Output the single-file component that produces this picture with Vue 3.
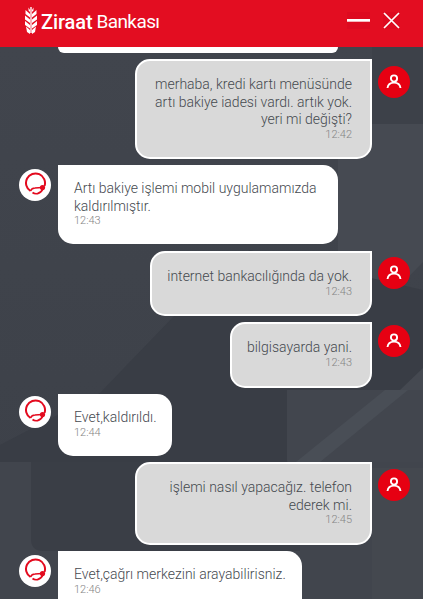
<template>
  <div class="chat">
    <header class="top">
      <div class="logo">
        <svg class="wheat" width="12" height="27" viewBox="0 0 12 27">
          <path d="M6 0 L6 26" stroke="#fff" stroke-width="1.4" />
          <path d="M3.5 0.5 L5 3 L5 5 L3.5 3.5Z M8.5 0.5 L7 3 L7 5 L8.5 3.5Z M0.5 3 L5 7 L5 10.5 L0.5 7Z M11.5 3 L7 7 L7 10.5 L11.5 7Z M0 8.5 L5 12.5 L5 16 L0 12.5Z M12 8.5 L7 12.5 L7 16 L12 12.5Z M0 14 L5 18 L5 21.5 L0 18Z M12 14 L7 18 L7 21.5 L12 18Z M1 19.5 L5 23 L5 27 L2 25Z M11 19.5 L7 23 L7 27 L10 25Z" fill="#fff" />
        </svg>
        <span class="brand"><b>Ziraat</b><i>Bankası</i></span>
      </div>
      <div class="controls">
        <span class="min"></span>
        <span class="close">
          <svg width="17" height="17" viewBox="0 0 17 17">
            <path d="M1 1 L16 16 M16 1 L1 16" stroke="#fff" stroke-width="1.7" />
          </svg>
        </span>
      </div>
    </header>

    <main class="body">
      <svg class="backdrop" width="423" height="552" viewBox="0 47 423 552">
        <defs>
          <linearGradient id="base" x1="0" y1="0" x2="0" y2="1">
            <stop offset="0" stop-color="#41454d" />
            <stop offset="1" stop-color="#3c4048" />
          </linearGradient>
        </defs>
        <rect x="0" y="47" width="423" height="552" fill="url(#base)" />
        <path d="M372 47 H423 V124 H372Z" fill="#3d4149" />
        <path d="M338 124 H423 V262 L396 290 H338Z" fill="#464a52" />
        <path d="M0 445 L100 393 L173 317 L250 250 L423 290 V462 H0Z" fill="#393d45" />
        <path d="M400 390 L423 368 V390Z" fill="#454951" />
        <path d="M287 390 H423 V468 H295 Q287 468 287 460Z" fill="#42464e" />
        <path d="M296 462 L385 390 H408 L320 462Z" fill="#494e56" />
        <path d="M0 462 H423 V599 H0Z" fill="#41454d" />
        <path d="M31 462 H300 V551 H43 Q31 551 31 539Z" fill="#3a3e46" />
        <path d="M372 468 H423 V599 H372Z" fill="#44484f" />
      </svg>

      <div class="stub"></div>
      <div
        v-for="(m, i) in messages"
        :key="i"
        class="row"
        :class="m.me ? 'me' : 'bot'"
        :style="{ height: m.h + 'px', marginTop: m.gap + 'px' }"
      >
        <div v-if="!m.me" class="avatar" :style="{ marginTop: m.av + 'px' }">
          <svg width="26" height="26" viewBox="0 0 26 26" fill="none">
            <path d="M8.5 19 A9.5 9.5 0 1 1 22.5 14" stroke="#e30a1e" stroke-width="2" />
            <path d="M8.5 19 C9.5 16.5 11 16 13 16 L20 15.5" stroke="#e30a1e" stroke-width="1.5" />
            <path d="M10.5 20.5 C13 22.5 18 22.5 21 17" stroke="#e30a1e" stroke-width="1.7" />
            <circle cx="20.5" cy="15.5" r="2.6" fill="#e30a1e" />
          </svg>
        </div>
        <div class="bubble" :style="{ width: m.w + 'px' }">
          <p class="text" v-for="(line, j) in m.lines" :key="j">{{ line }}</p>
          <span class="time">{{ m.time }}</span>
        </div>
        <div v-if="m.me" class="avatar red" :style="{ marginTop: m.av + 'px' }">
          <svg width="16" height="16" viewBox="0 0 16 16" fill="none">
            <circle cx="8" cy="4.5" r="3.1" stroke="#fff" stroke-width="1.9" />
            <path d="M1.5 14 C2 10.2 5 8.6 8 8.6 C11 8.6 14 10.2 14.5 14" stroke="#fff" stroke-width="1.9" />
          </svg>
        </div>
      </div>
    </main>
    <div class="foot"></div>
  </div>
</template>

<script setup>
const messages = [
  { me: true, w: 237, h: 100, gap: 6, av: 7, time: '12:42', lines: ['merhaba, kredi kartı menüsünde', 'artı bakiye iadesi vardı. artık yok.', 'yeri mi değişti?'] },
  { me: false, w: 280, h: 79, gap: 6, av: 4, time: '12:43', lines: ['Artı bakiye işlemi mobil uygulamamızda', 'kaldırılmıştır.'] },
  { me: true, w: 222, h: 65, gap: 7, av: 6, time: '12:43', lines: ['internet bankacılığında da yok.'] },
  { me: true, w: 142, h: 66, gap: 6, av: 3, time: '12:43', lines: ['bilgisayarda yani.'] },
  { me: false, w: 114, h: 62, gap: 6, av: 2, time: '12:44', lines: ['Evet,kaldırıldı.'] },
  { me: true, w: 237, h: 83, gap: 6, av: 7, time: '12:45', lines: ['işlemi nasıl yapacağız. telefon', 'ederek mi.'] },
  { me: false, w: 244, h: 62, gap: 6, av: 4, time: '12:46', lines: ['Evet,çağrı merkezini arayabilirisniz.'] },
]
</script>

<style>
html, body { margin: 0; background: #fff; }
</style>

<style scoped>
.chat {
  width: 423px;
  height: 608px;
  font-family: Roboto, "Liberation Sans", sans-serif;
  overflow: hidden;
  background: #fff;
  display: flex;
  flex-direction: column;
}
.top {
  height: 47px;
  flex: none;
  background: #e30d21;
  display: flex;
  align-items: center;
  justify-content: space-between;
  padding: 0 23px 0 25px;
}
.logo { display: flex; align-items: center; gap: 4px; margin-top: -7px; }
.brand { display: flex; gap: 4px; color: #fff; font-size: 20px; margin-top: 4px; white-space: nowrap; }
.brand b { font-weight: 500; letter-spacing: -0.1px; }
.brand i { font-style: normal; font-weight: 400; font-size: 19px; letter-spacing: -0.6px; }
.controls { display: flex; align-items: center; gap: 13px; margin-top: -6px; }
.min {
  width: 23px;
  height: 17px;
  background: linear-gradient(#dd0a20 0 7px, #fff 7px 9px, #f6b6bc 9px 10px, #dd0a20 10px);
  display: block;
}
.close { display: flex; background: #dd0a20; }
.body {
  position: relative;
  height: 552px;
  flex: none;
  overflow: hidden;
  background: #3c4048;
}
.backdrop { position: absolute; left: 0; top: 0; }
.stub {
  position: relative;
  width: 280px;
  height: 6px;
  margin-left: 58px;
  background: #fff;
  border-radius: 0 0 14px 14px;
}
.row { position: relative; display: flex; align-items: flex-start; }
.me { justify-content: flex-end; padding-right: 13px; gap: 6px; }
.bot { padding-left: 19px; gap: 7px; }
.avatar {
  width: 32px;
  height: 32px;
  border-radius: 50%;
  background: #fff;
  display: flex;
  align-items: center;
  justify-content: center;
  flex: none;
}
.avatar.red { background: #e60012; }
.bubble {
  box-sizing: border-box;
  height: 100%;
  padding: 15px 16px 0;
  border-radius: 15px;
  color: #45494f;
  font-size: 14px;
  font-weight: 300;
  line-height: 17.5px;
}
.me .bubble {
  background: #d9d9d9;
  border: 2px solid #fff;
  border-top-right-radius: 0;
  text-align: right;
  padding: 15px 18px 0 0;
}
.bot .bubble { background: #fff; border-top-left-radius: 0; }
.text { margin: 0; white-space: nowrap; }
.time { display: block; font-size: 11px; font-weight: 300; line-height: 12px; color: #858585; }
.foot { flex: 1; background: #fff; }
</style>
